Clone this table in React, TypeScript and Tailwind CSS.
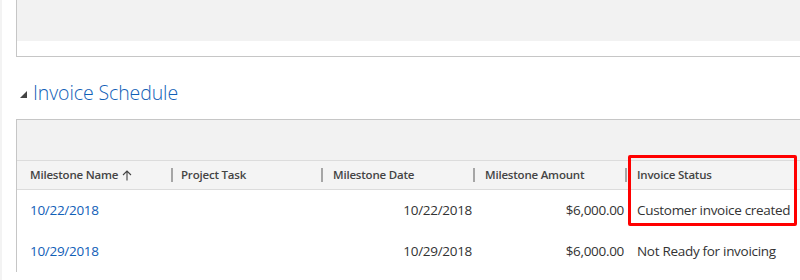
import React from "react";

const font = { fontFamily: '"Segoe UI", "Open Sans", "Noto Sans", sans-serif' };

function Sep() {
  return <div className="w-[2px] h-[14px] bg-[#a6a6a6] shrink-0" />;
}

function Gap() {
  return <div className="w-[2px] shrink-0" />;
}

const rows = [
  { name: "10/22/2018", date: "10/22/2018", amount: "$6,000.00", status: "Customer invoice created" },
  { name: "10/29/2018", date: "10/29/2018", amount: "$6,000.00", status: "Not Ready for invoicing" },
];

export default function App() {
  return (
    <div className="relative w-[800px] h-[280px] overflow-hidden bg-white flex" style={font}>
      <div className="w-[2px] shrink-0 bg-[#f3f3f3]" />
      <div className="flex-1 flex flex-col pl-[14px] min-w-0">
        {/* upper section box */}
        <div className="w-[800px] h-[57px] border-l border-b border-[#c6c6c6] flex flex-col shrink-0">
          <div className="h-[41px] bg-[#f2f2f2]" />
        </div>

        {/* section title */}
        <div className="h-[62px] flex items-center shrink-0 pt-[10px]">
          <svg width="7" height="7" viewBox="0 0 7 7" className="ml-[4px] mt-[3px]">
            <polygon points="7,0 7,7 0,7" fill="#444" />
          </svg>
          <span className="ml-[6px] text-[19.5px] leading-none text-[#1160b7] font-light tracking-[-0.1px]">
            Invoice Schedule
          </span>
        </div>

        {/* grid */}
        <div className="w-[800px] border-l border-t border-[#c6c6c6] flex flex-col shrink-0">
          <div className="h-[40px] bg-[#f2f2f2]" />
          <div className="h-[30px] bg-[#f4f4f4] border-t border-b border-[#dcdcdc] flex items-center text-[11.5px] font-semibold text-[#444] tracking-[-0.2px]">
            <div className="w-[154px] pl-[13px] flex items-center gap-[4px]">
              Milestone Name
              <svg width="10" height="11" viewBox="0 0 10 11" fill="none" stroke="#444" strokeWidth="1.1">
                <path d="M5 10.5V1M1 5L5 1l4 4" />
              </svg>
            </div>
            <Sep />
            <div className="w-[148px] pl-[8px]">Project Task</div>
            <Sep />
            <div className="w-[150px] pl-[10px]">Milestone Date</div>
            <Sep />
            <div className="w-[150px] pl-[10px]">Milestone Amount</div>
            <Sep />
            <div className="pl-[10px]">Invoice Status</div>
          </div>
          {rows.map((r) => (
            <div key={r.name} className="h-[41px] flex items-center text-[13.5px] tracking-[-0.3px] text-[#333]">
              <div className="w-[154px] pl-[13px] text-[#1160b7]">{r.name}</div>
              <Gap />
              <div className="w-[148px]" />
              <Gap />
              <div className="w-[150px] text-right pr-[1px]">{r.date}</div>
              <Gap />
              <div className="w-[150px] text-right pr-[1px]">{r.amount}</div>
              <Gap />
              <div className="pl-[10px] whitespace-nowrap">{r.status}</div>
            </div>
          ))}
        </div>
      </div>

      {/* highlight */}
      <div className="absolute left-[628px] top-[155px] w-[169px] h-[71px] border-[3px] border-[#ff0000] rounded-[2px]" />
    </div>
  );
}
